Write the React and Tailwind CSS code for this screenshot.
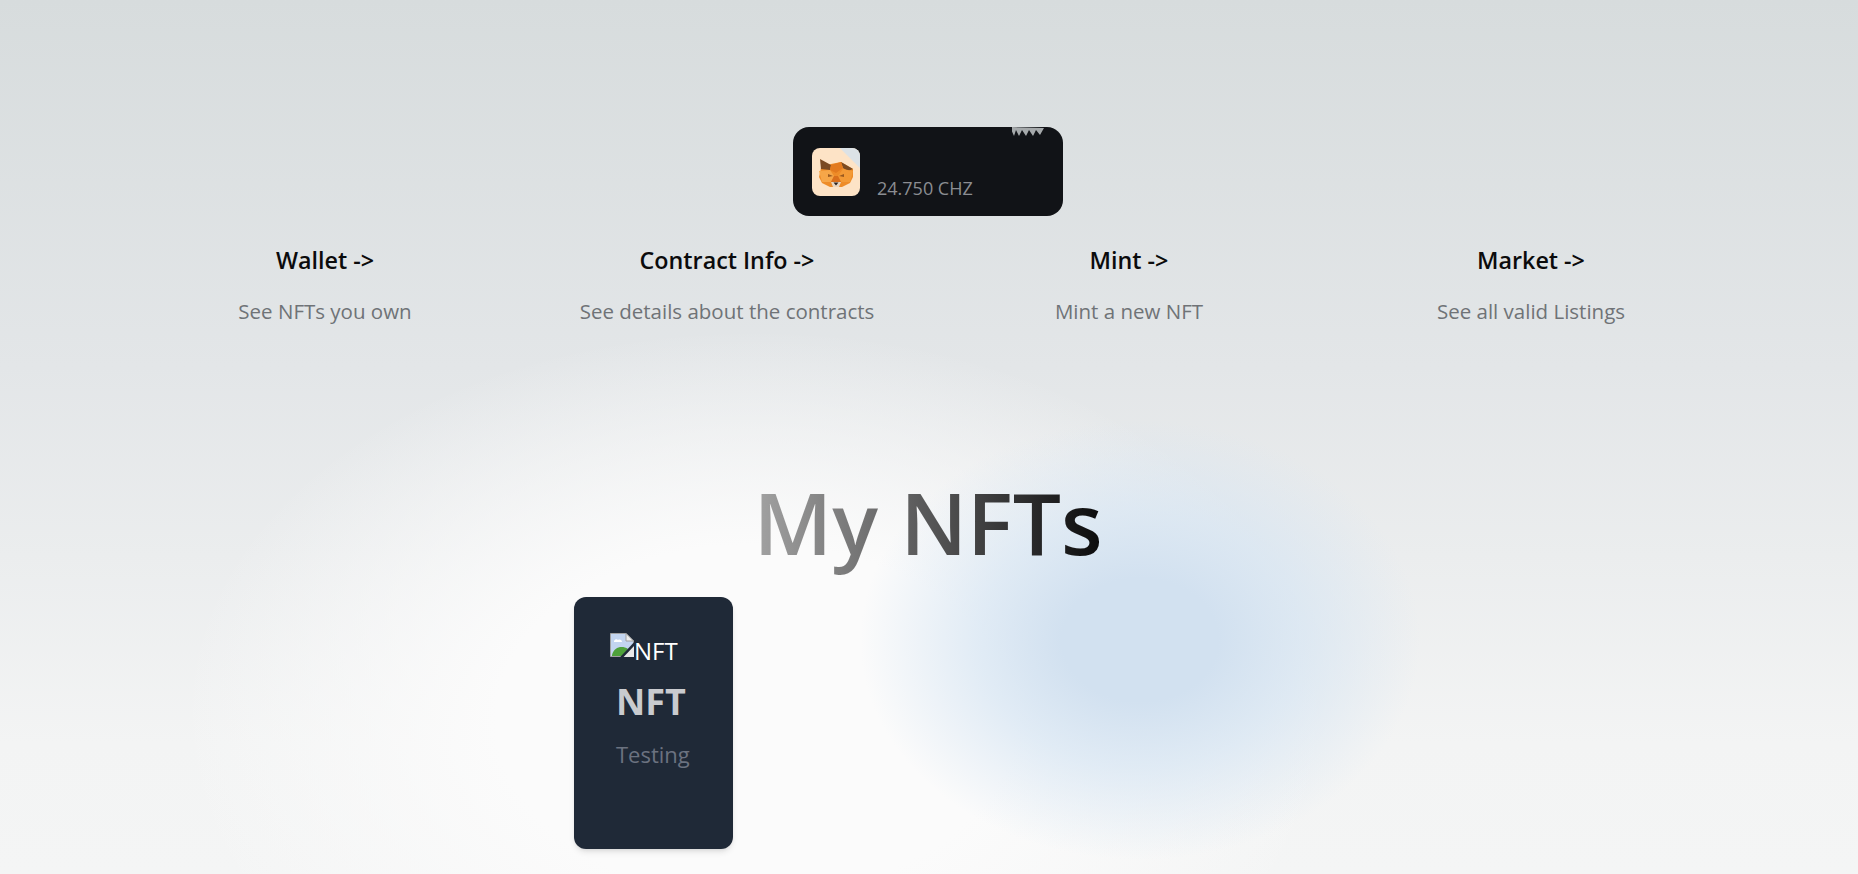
import React from 'react';

const links = [
  { title: 'Wallet ->', text: 'See NFTs you own' },
  { title: 'Contract Info ->', text: 'See details about the contracts' },
  { title: 'Mint ->', text: 'Mint a new NFT' },
  { title: 'Market ->', text: 'See all valid Listings' },
];

function FoxIcon() {
  return (
    <svg viewBox="0 0 48 48" className="w-full h-full">
      <polygon points="9,20 19,16 29,14 41,21 41,29 38,35 30,39 18,39 10,35 7,29" fill="#ee8c28" />
      <polygon points="8,11 19,17 18,22 9,21" fill="#7a4a22" />
      <polygon points="29,14 41,21 36,23 31,20" fill="#7a4a22" />
      <polygon points="19,17 29,14 31,20 24,25 18,22" fill="#e27a1f" />
      <polygon points="7,23 18,22 22,28 19,34 10,34" fill="#f6a648" />
      <polygon points="41,23 31,21 26,28 29,34 38,34" fill="#f39a36" />
      <polygon points="22,28 26,28 29,34 19,34" fill="#d96f1c" />
      <polygon points="16,26 21,28 16,29" fill="#9a5a20" />
      <polygon points="32,26 27,28 32,29" fill="#9a5a20" />
      <polygon points="19,34 29,34 27,39 21,39" fill="#e8d5c0" />
      <polygon points="21.5,34.5 26.5,34.5 24,37.5" fill="#2a2320" />
    </svg>
  );
}

function BrokenImage() {
  return (
    <svg viewBox="0 0 24 24" className="w-6 h-6 shrink-0 mb-[6px]">
      <path d="M0.5 0.5H16L23.5 8V23.5H0.5Z" fill="#c3d5f0" stroke="#a0a0a0" />
      <path d="M16 0.5V8H23.5Z" fill="#eeeeee" stroke="#a0a0a0" />
      <path d="M4 8c1-2 3-2 4-1 2-1 4 0 4 2H4Z" fill="#ffffff" />
      <path d="M2 22c2-8 10-10 16-6l-6 7H2Z" fill="#4ea13a" />
      <path d="M12 24L24 12V24Z" fill="#e8e8e8" />
      <path d="M11 25L25 10" stroke="#1f2937" strokeWidth="2.5" />
    </svg>
  );
}

export default function App() {
  return (
    <div className="relative h-[874px] overflow-hidden bg-[linear-gradient(180deg,#d7dcdd_0%,#e3e6e8_42%,#f3f4f4_85%,#f4f5f5_100%)] font-['Open_Sans','Noto_Sans',sans-serif]">
      {/* background glows */}
      <div className="absolute left-[180px] top-[330px] w-[1150px] h-[780px] rounded-full bg-[radial-gradient(closest-side,#fbfbfb_45%,rgba(251,251,251,0)_100%)]" />
      <div className="absolute left-[860px] top-[420px] w-[560px] h-[440px] rounded-full bg-[radial-gradient(closest-side,#d2e1f0_28%,rgba(214,229,243,0.7)_58%,rgba(225,236,246,0)_100%)]" />

      <div className="relative flex flex-col items-center pt-[127px]">
        {/* wallet box */}
        <div className="relative w-[270px] h-[89px] -ml-[2px] rounded-2xl bg-[#111317] flex items-center pl-[19px] overflow-hidden">
          <div className="relative w-12 h-12 rounded-lg overflow-hidden bg-[#fde3c6]">
            <div className="absolute inset-0 bg-[linear-gradient(45deg,rgba(220,226,230,0)_78%,#dce2e6_80%)]" />
            <div className="relative"><FoxIcon /></div>
          </div>
          <span className="ml-[17px] mt-[32px] text-[18px] leading-6 text-[#8b8d92]">24.750 CHZ</span>
          <svg viewBox="0 0 36 10" className="absolute right-[15px] top-0 w-9 h-2.5">
            <path d="M2 9l2-6 3 6 3-6 4 6 3-6 4 6 3-6 4 5 4-7-34-1Z" fill="#d7dcdd" opacity="0.75" />
          </svg>
        </div>

        {/* nav links */}
        <div className="grid grid-cols-4 w-[1608px] mt-7 -ml-[2px]">
          {links.map((item) => (
            <div key={item.title} className="text-center">
              <h2 className="text-[23.3px] leading-8 font-semibold text-[#0b0b0c]">{item.title}</h2>
              <p className="mt-[19px] text-[20.5px] leading-8 text-[#6f7377]">{item.text}</p>
            </div>
          ))}
        </div>

        {/* heading */}
        <h1 className="mt-[141px] -ml-[2px] text-[85.5px] leading-[108px] font-semibold text-transparent bg-clip-text bg-[linear-gradient(90deg,#a3a3a3,#0b0b0c)]">My NFTs</h1>

        {/* cards */}
        <div className="w-[710px] mt-[21px]">
          <div className="w-[159px] h-[252px] rounded-xl bg-[#1f2937] shadow-md pt-[36px] pl-9">
            <div className="flex items-end h-[30px] text-2xl leading-none text-white"><BrokenImage />NFT</div>
            <h3 className="mt-[19px] ml-[6px] text-4xl leading-10 font-bold text-[#c9cbcf]">NFT</h3>
            <p className="mt-[16px] ml-[6px] text-[22px] leading-8 text-[#6b7280]">Testing</p>
          </div>
        </div>
      </div>
    </div>
  );
}
